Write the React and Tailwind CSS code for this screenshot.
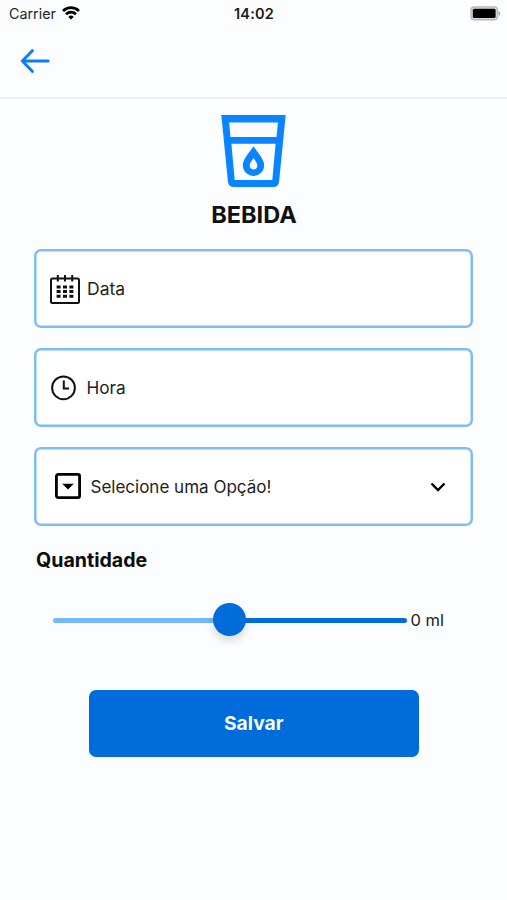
import { useState } from 'react'

function StatusBar() {
  return (
    <div className="grid h-7 grid-cols-3 items-center pr-[6px] pl-[9px]">
      <div className="flex items-center gap-[6px]">
        <span className="text-[14.3px] leading-7 text-[#262626]">Carrier</span>
        <svg width="18" height="14" viewBox="0 0 18 14" className="-mt-[2px]" fill="none" stroke="#000" strokeWidth="2.7">
          <path d="M1 4.9a11.6 11.6 0 0 1 16 0" />
          <path d="M4 8.2a7.2 7.2 0 0 1 10 0" />
          <path d="M9 13.6 6.3 10.9a3.9 3.9 0 0 1 5.4 0Z" fill="#000" stroke="none" />
        </svg>
      </div>
      <span className="-ml-[2px] text-center text-[14.5px] leading-7 font-semibold tracking-[0.2px] text-[#1a1a1a]">14:02</span>
      <svg className="-mt-[2px] justify-self-end" width="31" height="15" viewBox="0 0 31 15">
        <rect x="0.9" y="0.9" width="26.6" height="13" rx="3.5" fill="#d8d8d8" stroke="#b4b4b4" strokeWidth="1.2" />
        <rect x="2.8" y="2.8" width="22.8" height="9.2" rx="1.5" fill="#000" />
        <path d="M28.6 5.2c2 .7 2 3.7 0 4.4Z" fill="#9a9a9a" />
      </svg>
    </div>
  )
}

function GlassIcon() {
  return (
    <svg width="66" height="72" viewBox="0.5 0 66 72" fill="#0a84ff" fillRule="evenodd">
      <path d="M.8 0H65.2L58.6 66.5Q58 72 52.5 72H13.5Q8 72 7.4 66.5ZM8.6 7.6 10 22H56L57.4 7.6ZM10.9 28.8 14.2 65H51.8L55.1 28.8Z" />
      <path d="M33 31.3C35.6 35.6 43.7 44 43.7 50.2A10.7 10.7 0 0 1 22.3 50.2C22.3 44 30.4 35.6 33 31.3ZM33 43C31.8 45 29.2 48 29.2 50.6A3.8 3.8 0 0 0 36.8 50.6C36.8 48 34.2 45 33 43Z" />
    </svg>
  )
}

function CalendarIcon() {
  return (
    <svg width="30" height="29" viewBox="0 0 30 29" className="mt-px" fill="none" stroke="#111" strokeWidth="2">
      <rect x="1" y="3.4" width="28" height="24.6" rx="1.5" />
      <path d="M7.8 0v6.4M15 0v6.4M22.2 0v6.4" />
      <path
        d="M6.6 12h4M13 12h4M19.4 12h4M6.6 16.6h4M13 16.6h4M19.4 16.6h4M6.6 21.2h4M13 21.2h4M19.4 21.2h4"
        strokeWidth="3"
      />
    </svg>
  )
}

function ClockIcon() {
  return (
    <svg width="26" height="26" viewBox="0 0 26 26" fill="none" stroke="#111" strokeWidth="2">
      <circle cx="13.5" cy="12.8" r="11.4" />
      <path d="M13.8 5.4v8.1h5.2" />
    </svg>
  )
}

function SelectIcon() {
  return (
    <svg width="26" height="26" viewBox="0 0 26 26" className="-mt-px">
      <rect x="1.4" y="1.4" width="23.2" height="23.2" rx="1.8" fill="none" stroke="#000" strokeWidth="2.8" />
      <path d="M7.2 10.8h11.6l-5.8 5.8Z" fill="#000" />
    </svg>
  )
}

function Field({ className, children }) {
  return (
    <button
      type="button"
      className={`flex h-[79px] w-full items-center rounded-[7px] bg-white text-left text-[#222] shadow-[inset_0_0_0_2.5px_#7dbcf9] ${className}`}
    >
      {children}
    </button>
  )
}

export default function App() {
  const [position] = useState(50)

  return (
    <div className="min-h-[900px] w-full bg-[#fbfdff] font-['Inter',sans-serif]">
      <StatusBar />
      <header className="flex h-[71px] items-center border-b-2 border-[#eff0f2] pb-[3px] pl-[20px]">
        <svg width="30" height="24" viewBox="0 0 30 24" fill="none" stroke="#0a7cff" strokeWidth="3" strokeLinecap="round" strokeLinejoin="round">
          <path d="M12.3 1.7 2.3 12l10 10.3M2.5 12h25.6" />
        </svg>
      </header>

      <main className="px-[34px] pt-[16px]">
        <div className="flex flex-col items-center">
          <GlassIcon />
          <h1 className="mt-[13px] ml-px text-[23.5px] leading-[30px] font-bold text-[#111]">BEBIDA</h1>
        </div>

        <div className="mt-[19px] flex flex-col gap-5">
          <Field className="gap-[7px] pl-[16px] text-[17.5px]">
            <CalendarIcon />
            <span className="mt-px">Data</span>
          </Field>
          <Field className="gap-[10.5px] pl-[16px] text-[17.2px]">
            <ClockIcon />
            <span className="mt-px">Hora</span>
          </Field>
          <Field className="gap-[9.5px] pr-[27px] pl-[21px] text-[17px]">
            <SelectIcon />
            <span className="mt-[2px] flex-1">Selecione uma Opção!</span>
            <svg width="16" height="10" viewBox="0 0 16 10" fill="none" stroke="#000" strokeWidth="2.4">
              <path d="m1.5 1.5 6.5 6.5 6.5-6.5" />
            </svg>
          </Field>
        </div>

        <h2 className="mt-[21px] pl-[2px] text-[19.6px] leading-[26px] font-bold text-[#0c0c0c]">Quantidade</h2>

        <div className="mt-[29.5px] flex h-9 items-center gap-[3.5px] pl-[18.5px]">
          <div className="flex w-[354.5px] items-center">
            <div className="h-[5px] rounded-l-full bg-[#74b9fa]" style={{ width: `${position}%` }} />
            <div className="-mx-[16.5px] mb-[2px] size-[33px] shrink-0 rounded-full bg-[#006bdb] shadow-[0_5px_10px_rgba(0,0,0,0.14)]" />
            <div className="h-[5px] flex-1 rounded-r-full bg-[#006bdb]" />
          </div>
          <span className="text-[16.5px] text-[#222]">0 ml</span>
        </div>

        <button
          type="button"
          className="mt-[51px] ml-[54.5px] block h-[67px] w-[330.5px] rounded-[7px] bg-[#006bdb] text-[19.3px] font-bold text-[#f5faff]"
        >
          Salvar
        </button>
      </main>
    </div>
  )
}
